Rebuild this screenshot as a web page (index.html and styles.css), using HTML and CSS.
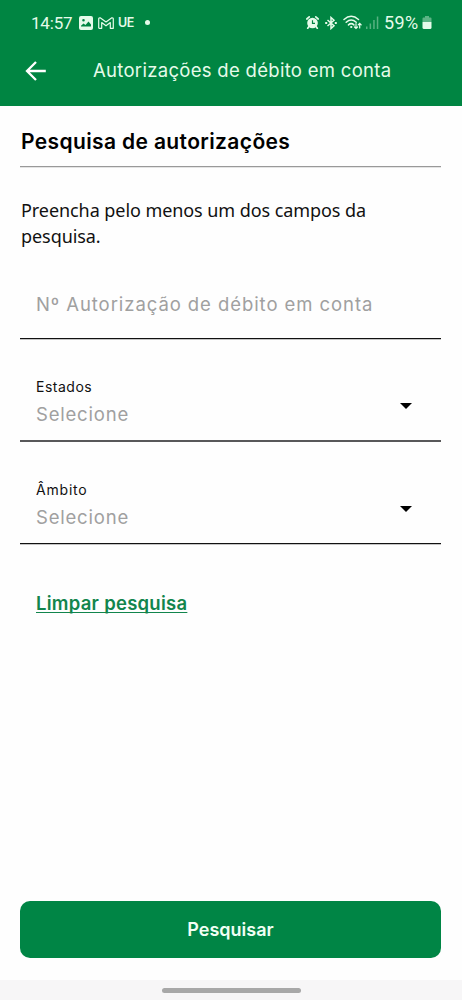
FILE: index.html
```html
<!DOCTYPE html>
<html lang="pt">
<head>
    <meta charset="UTF-8">
    <meta name="viewport" content="width=device-width, initial-scale=1.0">
    <title>Autorizações de débito em conta</title>
    <link rel="stylesheet" href="styles.css">
</head>
<body>
    <header class="header">
        <div class="status-bar">
            <span class="time">14:57</span>
            <svg class="icon-picture" width="14" height="14" viewBox="0 0 14 14">
                <path fill="currentColor" fill-rule="evenodd" d="M2 0h10a2 2 0 0 1 2 2v10a2 2 0 0 1-2 2H2a2 2 0 0 1-2-2V2a2 2 0 0 1 2-2zM2 10.500h10V8.500L9.500 5.500 6.500 9 4.500 7.500 2 9.800zM4.500 3a1.300 1.300 0 1 0 0 2.600 1.300 1.300 0 0 0 0-2.600z"/>
            </svg>
            <svg class="icon-mail" width="16" height="12" viewBox="0 0 16 12" fill="none" stroke="currentColor" stroke-width="1.200" stroke-linejoin="round">
                <path d="M.7 11.300V2Q.7.500 2.500.900L8 5 13.500.900Q15.300.500 15.300 2v9.300h-3V5.600L8 8.800 3.700 5.600v5.700H.7"/>
            </svg>
            <span class="carrier">UE</span>
            <span class="dot"></span>
            <div class="status-right">
                <svg class="icon-alarm" width="13" height="13" viewBox="0 0 13 13">
                    <circle cx="6.500" cy="7" r="5.300" fill="currentColor"/>
                    <path d="M.8 3 3.200.900M9.800.900l2.400 2.100M3 10.500l-1.300 1.700M10 10.500l1.300 1.700" stroke="currentColor" stroke-width="1.700" stroke-linecap="round"/>
                    <path d="M6.500 4.200V7.300H9" fill="none" stroke="#008542" stroke-width="1.200"/>
                </svg>
                <svg class="icon-bluetooth" width="12" height="14" viewBox="0 0 12 14" fill="none" stroke="currentColor" stroke-width="1.500">
                    <path d="M2.500 4 9 9.800 6 12.500v-11L9 4.200 2.500 10"/>
                    <path d="M.2 7h2M9.800 7h2" stroke-width="2"/>
                </svg>
                <svg class="icon-wifi" width="19" height="15" viewBox="0 0 19 15" fill="none" stroke="currentColor" stroke-width="1.500" stroke-linecap="round">
                    <path d="M1 4.500Q8.200-2 15.500 4.500M3.200 7.300q5-4.500 10 0M5.500 9.900q2.700-2.500 5.400 0"/>
                    <path d="M8.200 12h.1" stroke-width="2.200"/>
                    <path d="M13 8.500v5m-1.500-1.500 1.500 1.500 1.500-1.500M16.700 13V8.300m-1.500 1.500 1.500-1.500 1.500 1.500" stroke-width="1.200"/>
                </svg>
                <svg class="icon-signal" width="13" height="13" viewBox="0 0 13 13" fill="currentColor">
                    <path d="M0 10.500h1.500V13H0zM3.600 7.500h1.500V13H3.600zM7.200 4h1.500v9H7.200zM10.800.500h1.500V13h-1.500z" opacity=".38"/>
                </svg>
                <span class="battery-level">59%</span>
                <svg class="icon-battery" width="10" height="13" viewBox="0 0 10 13" fill="currentColor">
                    <path d="M3 0h4v1.500h1.500Q9.500 1.500 9.500 2.500V6H.5V2.500Q.5 1.500 1.500 1.500H3z" opacity=".4"/>
                    <path d="M.5 6h9v5.500q0 1.500-1.500 1.500H2Q.5 13 .5 11.500z"/>
                </svg>
            </div>
        </div>
        <div class="title-bar">
            <svg class="icon-back" width="22" height="20" viewBox="0 0 22 20" fill="none" stroke="currentColor" stroke-width="2.300">
                <path d="M20.800 10H2M11 1 2 10l9 9"/>
            </svg>
            <h1 class="title">Autorizações de débito em conta</h1>
        </div>
    </header>

    <main class="content">
        <h2 class="section-title">Pesquisa de autorizações</h2>
        <p class="intro">Preencha pelo menos um dos campos da pesquisa.</p>

        <form class="search-form">
            <div class="field field-input">
                <span class="placeholder">Nº Autorização de débito em conta</span>
            </div>
            <div class="field field-select">
                <div class="field-text">
                    <span class="label">Estados</span>
                    <span class="placeholder">Selecione</span>
                </div>
                <span class="arrow"></span>
            </div>
            <div class="field field-select">
                <div class="field-text">
                    <span class="label label-wide">Âmbito</span>
                    <span class="placeholder">Selecione</span>
                </div>
                <span class="arrow"></span>
            </div>
            <a class="clear-link" href="#">Limpar pesquisa</a>
            <button class="submit" type="button">Pesquisar</button>
        </form>
    </main>

    <footer class="nav-bar">
        <div class="nav-handle"></div>
    </footer>
</body>
</html>
```
FILE: styles.css
```css
* {
    box-sizing: border-box;
}
body {
    font-family: Inter, "Liberation Sans", sans-serif;
    background-color: #fefefe;
    color: #111;
    margin: 0;
    height: 1000px;
    display: flex;
    flex-direction: column;
    overflow: hidden;
}
svg {
    display: block;
    flex-shrink: 0;
}
.header {
    background-color: #008542;
    color: #e6fbea;
    height: 106px;
    flex-shrink: 0;
}
.status-bar {
    display: flex;
    align-items: center;
    height: 45px;
    padding: 0 30px 0 31px;
}
.time {
    font-family: Roboto, sans-serif;
    font-size: 17px;
    letter-spacing: -0.2px;
    width: 48px;
}
.icon-mail {
    margin-left: 5px;
}
.carrier {
    font-size: 12.5px;
    font-weight: 600;
    letter-spacing: -0.5px;
    width: 16px;
    margin-left: 4px;
}
.dot {
    width: 5px;
    height: 5px;
    border-radius: 50%;
    background-color: currentColor;
    margin-left: 11px;
}
.status-right {
    display: flex;
    align-items: center;
    margin-left: auto;
}
.icon-bluetooth {
    margin-left: 6px;
}
.icon-wifi {
    margin-left: 6px;
}
.icon-signal {
    margin-left: 4px;
}
.battery-level {
    font-family: Roboto, sans-serif;
    font-size: 18px;
    letter-spacing: 0.4px;
    margin-left: 5px;
    width: 36px;
}
.icon-battery {
    margin-left: 2px;
}
.title-bar {
    display: flex;
    align-items: center;
    height: 51px;
    padding-left: 25px;
}
.icon-back {
    color: #fff;
}
.title {
    margin: -2px 0 0 46px;
    font-size: 18.5px;
    line-height: 26px;
    letter-spacing: 0.3px;
    font-weight: 400;
    white-space: nowrap;
}
.content {
    flex: 1;
    display: flex;
    flex-direction: column;
    padding: 0 21px 0 20px;
}
.section-title {
    margin: 0;
    height: 61px;
    padding: 21px 0 0 1px;
    border-bottom: 1px solid #999;
    box-shadow: 0 1px 0 #e4e4e4;
    font-size: 21px;
    line-height: 29px;
    letter-spacing: 0.37px;
    font-weight: 600;
    color: #000;
}
.intro {
    font-family: "Noto Sans", sans-serif;
    margin: 30px 0 0 1px;
    font-size: 18px;
    line-height: 26px;
    letter-spacing: -0.07px;
}
.search-form {
    flex: 1;
    display: flex;
    flex-direction: column;
    padding-bottom: 22px;
}
.field {
    display: flex;
    border-bottom: 1px solid #111;
    box-shadow: 0 1px 0 #c4c4c4;
    padding-left: 16px;
}
.field-input {
    height: 90px;
    padding-top: 42px;
}
.field-select {
    height: 103px;
    padding-top: 38px;
    justify-content: space-between;
    border-bottom: 2px solid #58585a;
    box-shadow: none;
}
.field-select + .field-select {
    height: 102px;
    border-bottom: 1px solid #111;
    box-shadow: 0 1px 0 #c4c4c4;
}
.field-text {
    display: flex;
    flex-direction: column;
}
.label {
    font-size: 14px;
    line-height: 20px;
    letter-spacing: 0.5px;
}
.label-wide {
    letter-spacing: 0.8px;
}
.placeholder {
    font-size: 18.5px;
    line-height: 26px;
    letter-spacing: 0.93px;
    color: #a0a0a0;
    white-space: nowrap;
}
.field-text .placeholder {
    margin-top: 4px;
    letter-spacing: 0.8px;
}
.arrow {
    width: 0;
    height: 0;
    border-left: 6.5px solid transparent;
    border-right: 6.5px solid transparent;
    border-top: 6.5px solid #000;
    margin: 26px 29px 0 0;
}
.clear-link {
    align-self: flex-start;
    margin: 46px 0 0 16px;
    font-size: 18.5px;
    line-height: 26px;
    letter-spacing: 0.26px;
    font-weight: 600;
    color: #12854d;
    text-decoration: underline;
    text-decoration-thickness: 1px;
    text-underline-offset: 2px;
    text-decoration-skip-ink: none;
}
.submit {
    margin-top: auto;
    height: 57px;
    border: none;
    border-radius: 10px;
    background-color: #008545;
    color: #f0fff4;
    font-family: inherit;
    font-size: 18px;
    font-weight: 600;
    cursor: pointer;
}
.nav-bar {
    height: 20px;
    background-color: #f7f6f7;
    display: flex;
    justify-content: center;
    padding-top: 8px;
}
.nav-handle {
    width: 139px;
    height: 5px;
    border-radius: 3px;
    background-color: #a8a8a8;
}
```
